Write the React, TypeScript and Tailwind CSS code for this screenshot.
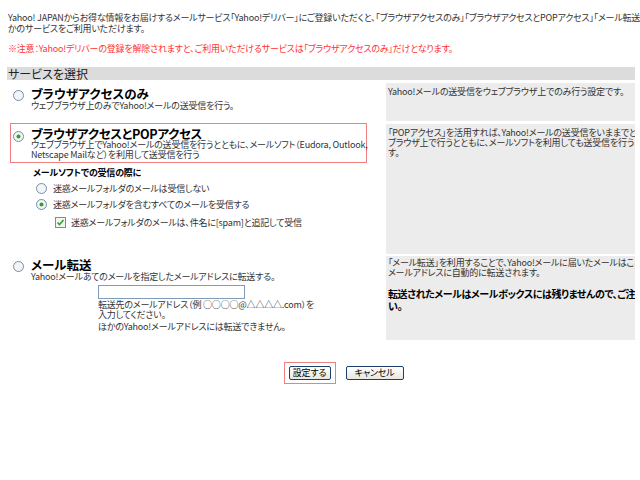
const FONT =
  "font-['Noto_Sans_CJK_JP','Noto_Sans',sans-serif] [font-feature-settings:'palt']";

function Radio({ checked }: { checked?: boolean }) {
  return (
    <svg width="11" height="11" viewBox="0 0 11 11" className="shrink-0">
      <circle cx="5.5" cy="5.5" r="5" fill="#f4f4f4" stroke="#6f8fb0" strokeWidth="1" />
      {checked && <circle cx="5.5" cy="5.5" r="2" fill="#2aa52a" />}
    </svg>
  );
}

function Checkbox() {
  return (
    <svg width="11" height="11" viewBox="0 0 11 11" className="shrink-0">
      <rect x="0.5" y="0.5" width="10" height="10" fill="#f4f4f4" stroke="#6f8fb0" />
      <path d="M2.5 5.5 L4.5 7.5 L8.5 3" fill="none" stroke="#2aa52a" strokeWidth="1.6" />
    </svg>
  );
}

export default function App() {
  return (
    <div className={`w-[640px] h-[480px] overflow-hidden bg-white text-[#333] text-[9px] tracking-[-0.2px] ${FONT}`}>
      <div className="pt-[12px] pl-[8px] leading-[11px] whitespace-nowrap">
        <p>
          Yahoo! JAPANからお得な情報をお届けするメールサービス「Yahoo!デリバー」にご登録いただくと、「ブラウザアクセスのみ」「ブラウザアクセスとPOPアクセス」「メール転送」のいずれ
        </p>
        <p>かのサービスをご利用いただけます。</p>
        <p className="mt-[9px] text-[#f33]">
          ※注意：Yahoo!デリバーの登録を解除されますと、ご利用いただけるサービスは「ブラウザアクセスのみ」だけとなります。
        </p>
      </div>

      <div className="ml-[7px] mt-[13px] w-[628px]">
        <div className="h-[13px] bg-[#dcdcdc] pl-[1px] text-[12px] leading-[13px] tracking-normal text-[#222]">
          サービスを選択
        </div>

        {/* row 1 */}
        <div className="mt-[3px] flex h-[38px] gap-[2px]">
          <div className="w-[377px] pl-[6px] pt-[4px]">
            <div className="flex items-start gap-[7px]">
              <div className="pt-[3px]">
                <Radio />
              </div>
              <div>
                <p className="text-[12.5px] font-bold leading-[13px] tracking-normal text-black">ブラウザアクセスのみ</p>
                <p className="leading-[11px]">ウェブブラウザ上のみでYahoo!メールの送受信を行う。</p>
              </div>
            </div>
          </div>
          <div className="w-[249px] overflow-hidden bg-[#ececec] pl-[2px] pt-[4px] leading-[10px] whitespace-nowrap">
            Yahoo!メールの送受信をウェブブラウザ上でのみ行う設定です。
          </div>
        </div>

        {/* row 2 */}
        <div className="mt-[3px] flex h-[130px] gap-[2px]">
          <div className="w-[377px]">
            <div className="-mt-[1px] ml-[3px] h-[40px] w-[357px] border border-[#f08080] pl-[2px] pt-[3px]">
              <div className="flex items-start gap-[7px]">
                <div className="pt-[4px]">
                  <Radio checked />
                </div>
                <div>
                  <p className="text-[12.5px] font-bold leading-[13px] tracking-[-0.3px] text-black">ブラウザアクセスとPOPアクセス</p>
                  <p className="leading-[10px] whitespace-nowrap">
                    ウェブブラウザ上でYahoo!メールの送受信を行うとともに、メールソフト（Eudora, Outlook,
                  </p>
                  <p className="leading-[10px]">Netscape Mailなど）を利用して送受信を行う</p>
                </div>
              </div>
            </div>
            <p className="ml-[26px] mt-[4px] font-bold leading-[11px] text-black">メールソフトでの受信の際に</p>
            <div className="ml-[29px] mt-[5px] flex items-center gap-[6px] leading-[11px]">
              <Radio />
              <span>迷惑メールフォルダのメールは受信しない</span>
            </div>
            <div className="ml-[29px] mt-[5px] flex items-center gap-[6px] leading-[11px]">
              <Radio checked />
              <span>迷惑メールフォルダを含むすべてのメールを受信する</span>
            </div>
            <div className="ml-[48px] mt-[7px] flex items-center gap-[5px] leading-[11px]">
              <Checkbox />
              <span>迷惑メールフォルダのメールは、件名に[spam]と追記して受信</span>
            </div>
          </div>
          <div className="w-[249px] overflow-hidden bg-[#ececec] pl-[2px] pt-[4px] leading-[10px] whitespace-nowrap">
            <p>「POPアクセス」を活用すれば、Yahoo!メールの送受信をいままでどおりウェブ</p>
            <p>ブラウザ上で行うとともに、メールソフトを利用しても送受信を行うことができま</p>
            <p>す。</p>
          </div>
        </div>

        {/* row 3 */}
        <div className="mt-[2px] flex h-[84px] gap-[2px]">
          <div className="w-[377px] pl-[6px] pt-[2px]">
            <div className="flex items-start gap-[7px]">
              <div className="pt-[3px]">
                <Radio />
              </div>
              <div>
                <p className="text-[12.5px] font-bold leading-[13px] tracking-normal text-black">メール転送</p>
                <p className="leading-[11px]">Yahoo!メールあてのメールを指定したメールアドレスに転送する。</p>
              </div>
            </div>
            <div className="ml-[85px] mt-[3px]">
              <div className="h-[14px] w-[147px] border border-[#7f9db9] bg-white" />
              <p className="mt-[1px] leading-[10px]">転送先のメールアドレス（例 ○○○○@△△△△.com）を</p>
              <p className="leading-[10px]">入力してください。</p>
              <p className="mt-[2px] leading-[10px]">ほかのYahoo!メールアドレスには転送できません。</p>
            </div>
          </div>
          <div className="w-[249px] overflow-hidden bg-[#ececec] pl-[2px] pt-[2px] whitespace-nowrap">
            <p className="leading-[10px]">「メール転送」を利用することで、Yahoo!メールに届いたメールはここで指定した</p>
            <p className="leading-[10px]">メールアドレスに自動的に転送されます。</p>
            <p className="mt-[10px] text-[10px] font-bold leading-[12px] tracking-[-0.4px] text-black">
              転送されたメールはメールボックスには残りませんので、ご注意くださ
            </p>
            <p className="text-[10px] font-bold leading-[12px] text-black">い。</p>
          </div>
        </div>
      </div>

      <div className="mt-[22px] flex items-center justify-center gap-[10px] pl-[47px]">
        <div className="flex border border-[#f08080] px-[4px] py-[3px]">
          <button className="h-[14px] w-[42px] rounded-[2px] border border-[#1c3f6e] bg-gradient-to-b from-white to-[#e8e8e0] text-[9px] leading-[12px] text-black">
            設定する
          </button>
        </div>
        <div className="flex">
          <button className="h-[14px] w-[58px] rounded-[2px] border border-[#1c3f6e] bg-gradient-to-b from-white to-[#e8e8e0] text-[9px] leading-[12px] text-black">
            キャンセル
          </button>
        </div>
      </div>
    </div>
  );
}
